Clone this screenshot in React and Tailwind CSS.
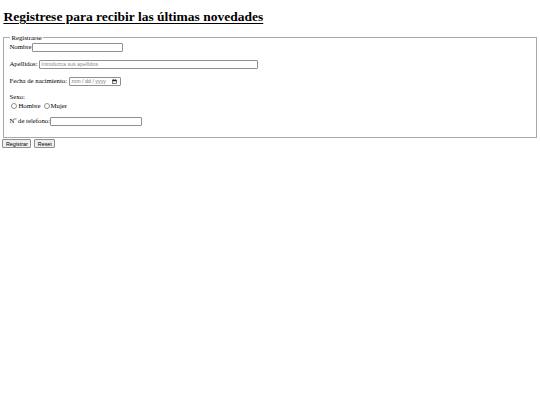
export default function App() {
  return (
    <div className="min-h-[405px] bg-white px-[3.4px] pt-[9px] text-black font-['Liberation_Serif',serif] text-[6.75px] leading-[7.8px]">
      <h1 className="text-[13.5px] leading-[15.5px] font-bold underline decoration-[1px] underline-offset-[1.5px]">
        Registrese para recibir las últimas novedades
      </h1>

      <fieldset className="mt-[9px] border border-[#a9a9a9] px-[5px] pt-[1px] pb-[11px]">
        <legend className="px-[1px] ml-[1px]">Registrarse</legend>

        <div className="flex flex-col">
          <div className="flex items-center h-[10px]">
            <span>Nombre</span>
            <input className="w-[91px] h-[9px] border border-[#8f8f8f] rounded-[1px] bg-white" />
          </div>

          <div className="flex items-center h-[10px] mt-[7px]">
            <span>Apellidos:&nbsp;</span>
            <input
              placeholder="Introduzca sus apellidos"
              className="w-[219px] h-[9px] border border-[#8f8f8f] rounded-[1px] bg-white px-[1px] font-['Liberation_Sans',sans-serif] text-[5.3px] placeholder:text-[#8a8a8a]"
            />
          </div>

          <div className="flex items-center h-[10px] mt-[7px]">
            <span>Fecha de nacimiento:&nbsp;</span>
            <div className="w-[52px] h-[9px] border border-[#8f8f8f] rounded-[1px] bg-white flex items-center justify-between pl-[2px] pr-[3px] font-['Liberation_Sans',sans-serif] text-[5.3px] leading-[6px] text-[#777]">
              <span>mm / dd / yyyy</span>
              <svg width="5" height="5" viewBox="0 0 10 10">
                <rect x="1" y="2" width="8" height="7" fill="none" stroke="#222" strokeWidth="1.2" />
                <rect x="1" y="2" width="8" height="2.5" fill="#222" />
                <rect x="2.5" y="0.5" width="1" height="2" fill="#222" />
                <rect x="6.5" y="0.5" width="1" height="2" fill="#222" />
              </svg>
            </div>
          </div>

          <div className="mt-[7px] h-[8px] flex items-center">Sexo:</div>
          <div className="flex items-center h-[9px] pl-[2px]">
            <span className="w-[6px] h-[6px] rounded-full border border-[#8f8f8f] bg-white mr-[1px]" />
            <span>Hombre</span>
            <span className="w-[6px] h-[6px] rounded-full border border-[#8f8f8f] bg-white ml-[3px] mr-[1px]" />
            <span>Mujer</span>
          </div>

          <div className="flex items-center h-[10px] mt-[6px]">
            <span>Nº de telefono:</span>
            <input className="w-[92px] h-[9px] border border-[#8f8f8f] rounded-[1px] bg-white" />
          </div>
        </div>
      </fieldset>

      <div className="flex gap-[3px] mt-[1px] ml-[-1px]">
        <button className="h-[9px] px-[2.5px] border border-[#8f8f8f] rounded-[1px] bg-[#efefef] font-['Liberation_Sans',sans-serif] text-[5.4px] leading-[6px]">
          Registrar
        </button>
        <button className="h-[9px] px-[2.5px] border border-[#8f8f8f] rounded-[1px] bg-[#efefef] font-['Liberation_Sans',sans-serif] text-[5.4px] leading-[6px]">
          Reset
        </button>
      </div>
    </div>
  );
}
